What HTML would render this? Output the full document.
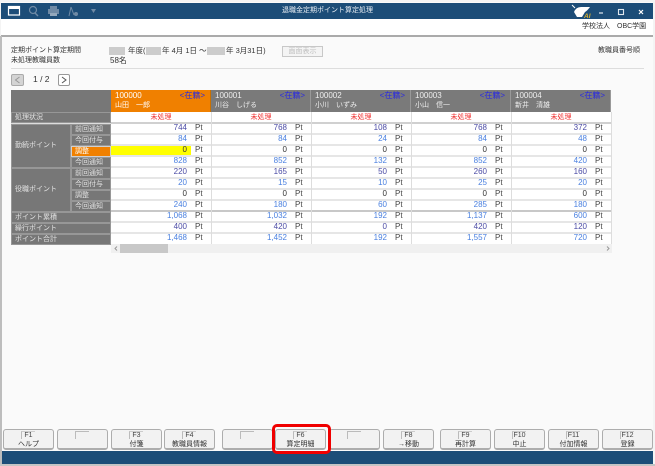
<!DOCTYPE html>
<html lang="ja">
<head>
<meta charset="utf-8">
<style>
html,body{margin:0;padding:0;width:655px;height:466px;overflow:hidden;background:#f4f4f4}
body{font-family:"Liberation Sans","Noto Sans CJK JP",sans-serif;font-size:7px;color:#333;position:relative}
div,span{position:absolute;white-space:nowrap;box-sizing:border-box}
#win{left:1px;top:2px;width:652px;height:462px;background:#fafafa;overflow:hidden;filter:blur(.3px)}
.abs{line-height:10px}
.m{font-size:7.5px}
.lb{background:#777;color:#e2e2e2;border:1px solid #979797;line-height:9px;padding-left:3px;height:11px}
.row{left:110px;width:500px;height:10px;background:#fff;font-size:8px}
.v{line-height:10px;width:40px;text-align:right;top:-1px}
.p{line-height:10px;top:-1px;color:#444}
.b{color:#4a80e0}.d{color:#4b4ba5}.k{color:#333}
.sep{top:110px;width:1px;height:132px;background:#ddd}
.gap{left:110px;width:500px;height:2px;background:#e6e6e6}
.hd{top:88px;height:22px;width:100px;background:#7a7a7a;color:#eee;border-right:1px solid #999}
.hd .id{left:4px;top:1px;line-height:10px;font-size:8px}
.hd .st{right:5px;top:1px;line-height:10px;color:#2a2ae0;font-size:8px}
.hd .nm{left:4px;top:11px;line-height:10px}
.st2{top:110px;height:11px;width:100px;background:#fff;color:#f03030;text-align:center;line-height:11px}
.fk{top:427px;height:21px;width:51px;background:#f2f2f2;border:1px solid #adadad;border-bottom-width:2px;border-radius:3px;color:#333;text-align:center}
.fk .n{left:17px;width:14px;top:1px;height:8px;line-height:8px;font-size:7px;color:#444;border-left:1px solid #bbb;border-top:1px solid #ccc}
.fk .t{left:0;right:0;top:10px;line-height:10px}
.fk .e{left:17px;top:1px;width:14px;height:8px;border-left:1px solid #bbb;border-top:1px solid #bbb}
</style>
</head>
<body>
<div id="win">
  <!-- title bar -->
  <div style="left:0;top:1px;width:652px;height:16px;background:#1c4d78"></div>
  <svg style="position:absolute;left:0;top:1px" width="110" height="16" viewBox="0 0 110 16">
    <rect x="7.500" y="3.500" width="11" height="8.500" fill="none" stroke="#fff" stroke-width="1.200"/><rect x="8" y="4" width="10" height="2" fill="#fff"/>
    <circle cx="32" cy="7" r="3.500" fill="none" stroke="#6f8aa5" stroke-width="1.200"/><path d="M34 10l3 3" stroke="#6f8aa5" stroke-width="1.400"/>
    <rect x="47" y="6" width="11" height="5" fill="#6f8aa5"/><rect x="49" y="3" width="7" height="3" fill="#6f8aa5"/><rect x="49" y="10" width="7" height="3" fill="#93a8bc"/>
    <path d="M70 4l-2 9M70 4l3 8" stroke="#6f8aa5" fill="none"/><circle cx="75" cy="11" r="2" fill="#6f8aa5"/>
    <path d="M90 6h5l-2.500 4z" fill="#6f8aa5"/>
  </svg>
  <div class="abs" style="left:281px;top:4px;color:#e8eef4;">退職金定期ポイント算定処理</div>
  <svg style="position:absolute;left:570px;top:1px" width="82" height="16" viewBox="0 0 82 16">
    <path d="M3 9Q5 4 10 4L19 4Q16 8 14 9L11 14L6 14Z" fill="#fff"/><path d="M1 2l3 3" stroke="#fff"/>
    <text x="13" y="15" font-size="6.500" font-weight="bold" font-style="italic" fill="#d8b030" font-family="Liberation Sans">AI</text>
    <path d="M28 10h4" stroke="#dfe7ee" stroke-width="1.200"/>
    <rect x="47.500" y="6.500" width="5" height="5" fill="none" stroke="#dfe7ee" stroke-width="1.100"/>
    <path d="M68 7l4 4M72 7l-4 4" stroke="#fff" stroke-width="1.200"/>
  </svg>
  <!-- white band -->
  <div style="left:0;top:17px;width:652px;height:18px;background:#fff;border-bottom:2px solid #aaa"></div>
  <div class="abs" style="left:581px;top:20px;">学校法人　OBC学園</div>
  <!-- period -->
  <div class="abs" style="left:10px;top:44px;">定期ポイント算定期間</div>
  <div class="abs" style="left:10px;top:54px;">未処理教職員数</div>
  <div style="left:108px;top:45px;width:16px;height:8px;background:#ccc"></div>
  <div class="abs m" style="left:127px;top:44px;">年度(</div>
  <div style="left:145px;top:45px;width:15px;height:8px;background:#ccc"></div>
  <div class="abs m" style="left:161px;top:44px;">年 4月 1日 ～</div>
  <div style="left:206px;top:45px;width:18px;height:8px;background:#ccc"></div>
  <div class="abs m" style="left:225px;top:44px;">年 3月31日)</div>
  <div class="abs m" style="left:109px;top:54px;font-size:8px">58名</div>
  <div class="abs" style="left:281px;top:44px;width:41px;height:11px;background:#f4f4f4;border:1px solid #c8c8c8;color:#c0c0c0;text-align:center;line-height:9px">画面表示</div>
  <div class="abs" style="left:597px;top:44px;">教職員番号順</div>
  <div style="left:10px;top:66px;width:633px;height:1px;background:#ddd"></div>
  <!-- pager -->
  <div style="left:10px;top:72px;width:13px;height:12px;background:#d4d4d4;border:1px solid #aaa;border-radius:2px"></div>
  <svg style="position:absolute;left:10px;top:72px" width="13" height="12"><path d="M8.500 3L4.500 6l4 3" fill="none" stroke="#999"/></svg>
  <div class="abs" style="left:32px;top:72px;font-size:8.500px">1 / 2</div>
  <div style="left:57px;top:72px;width:12px;height:12px;background:#fff;border:1px solid #999;border-radius:2px"></div>
  <svg style="position:absolute;left:57px;top:72px" width="12" height="12"><path d="M4 3l4 3-4 3" fill="none" stroke="#555"/></svg>

  <!-- table labels -->
  <div style="left:10px;top:88px;width:100px;height:154px;background:#ddd"></div>
  <div style="left:10px;top:88px;width:100px;height:22px;background:#777"></div>
  <div class="lb" style="left:10px;top:110px;width:100px;height:11px">処理状況</div>
  <div class="lb" style="left:10px;top:122px;width:60px;height:44px;line-height:42px">勤続ポイント</div>
  <div class="lb" style="left:70px;top:122px;width:40px">前回通知</div>
  <div class="lb" style="left:70px;top:133px;width:40px">今回付与</div>
  <div class="lb" style="left:70px;top:144px;width:40px;background:#f08000;color:#fff;border-color:#d0d0d0">調整</div>
  <div class="lb" style="left:70px;top:155px;width:40px">今回通知</div>
  <div class="lb" style="left:10px;top:166px;width:60px;height:44px;line-height:42px">役職ポイント</div>
  <div class="lb" style="left:70px;top:166px;width:40px">前回通知</div>
  <div class="lb" style="left:70px;top:177px;width:40px">今回付与</div>
  <div class="lb" style="left:70px;top:188px;width:40px">調整</div>
  <div class="lb" style="left:70px;top:199px;width:40px">今回通知</div>
  <div class="lb" style="left:10px;top:210px;width:100px">ポイント累積</div>
  <div class="lb" style="left:10px;top:221px;width:100px">繰行ポイント</div>
  <div class="lb" style="left:10px;top:232px;width:100px">ポイント合計</div>

  <!-- headers -->
  <div class="hd" style="left:110px;background:#f08000;color:#fff;border-right:1px solid #c87000"><span class="id">100000</span><span class="st">&lt;在籍&gt;</span><span class="nm">山田　一郎</span></div>
  <div class="hd" style="left:210px"><span class="id">100001</span><span class="st">&lt;在籍&gt;</span><span class="nm">川谷　しげる</span></div>
  <div class="hd" style="left:310px"><span class="id">100002</span><span class="st">&lt;在籍&gt;</span><span class="nm">小川　いずみ</span></div>
  <div class="hd" style="left:410px"><span class="id">100003</span><span class="st">&lt;在籍&gt;</span><span class="nm">小山　信一</span></div>
  <div class="hd" style="left:510px"><span class="id">100004</span><span class="st">&lt;在籍&gt;</span><span class="nm">新井　清雄</span></div>

  <div class="st2" style="left:110px">未処理</div>
  <div class="st2" style="left:210px">未処理</div>
  <div class="st2" style="left:310px">未処理</div>
  <div class="st2" style="left:410px">未処理</div>
  <div class="st2" style="left:510px">未処理</div>
  <div style="left:110px;top:120px;width:500px;height:2px;background:#d0d0d0"></div>

  <div class="row" style="top:122px"><span class="v d" style="left:36px">744</span><span class="p" style="left:84px">Pt</span><span class="v d" style="left:136px">768</span><span class="p" style="left:184px">Pt</span><span class="v d" style="left:236px">108</span><span class="p" style="left:284px">Pt</span><span class="v d" style="left:336px">768</span><span class="p" style="left:384px">Pt</span><span class="v d" style="left:436px">372</span><span class="p" style="left:484px">Pt</span></div>
  <div class="row" style="top:133px"><span class="v b" style="left:36px">84</span><span class="p" style="left:84px">Pt</span><span class="v b" style="left:136px">84</span><span class="p" style="left:184px">Pt</span><span class="v b" style="left:236px">24</span><span class="p" style="left:284px">Pt</span><span class="v b" style="left:336px">84</span><span class="p" style="left:384px">Pt</span><span class="v b" style="left:436px">48</span><span class="p" style="left:484px">Pt</span></div>
  <div class="row" style="top:144px"><span style="left:0;top:0;width:80px;height:10px;background:#ffff00"></span><span class="v k" style="left:36px">0</span><span class="p" style="left:84px">Pt</span><span class="v k" style="left:136px">0</span><span class="p" style="left:184px">Pt</span><span class="v k" style="left:236px">0</span><span class="p" style="left:284px">Pt</span><span class="v k" style="left:336px">0</span><span class="p" style="left:384px">Pt</span><span class="v k" style="left:436px">0</span><span class="p" style="left:484px">Pt</span></div>
  <div class="row" style="top:155px"><span class="v b" style="left:36px">828</span><span class="p" style="left:84px">Pt</span><span class="v b" style="left:136px">852</span><span class="p" style="left:184px">Pt</span><span class="v b" style="left:236px">132</span><span class="p" style="left:284px">Pt</span><span class="v b" style="left:336px">852</span><span class="p" style="left:384px">Pt</span><span class="v b" style="left:436px">420</span><span class="p" style="left:484px">Pt</span></div>
  <div class="row" style="top:166px"><span class="v d" style="left:36px">220</span><span class="p" style="left:84px">Pt</span><span class="v d" style="left:136px">165</span><span class="p" style="left:184px">Pt</span><span class="v d" style="left:236px">50</span><span class="p" style="left:284px">Pt</span><span class="v d" style="left:336px">260</span><span class="p" style="left:384px">Pt</span><span class="v d" style="left:436px">160</span><span class="p" style="left:484px">Pt</span></div>
  <div class="row" style="top:177px"><span class="v b" style="left:36px">20</span><span class="p" style="left:84px">Pt</span><span class="v b" style="left:136px">15</span><span class="p" style="left:184px">Pt</span><span class="v b" style="left:236px">10</span><span class="p" style="left:284px">Pt</span><span class="v b" style="left:336px">25</span><span class="p" style="left:384px">Pt</span><span class="v b" style="left:436px">20</span><span class="p" style="left:484px">Pt</span></div>
  <div class="row" style="top:188px"><span class="v k" style="left:36px">0</span><span class="p" style="left:84px">Pt</span><span class="v k" style="left:136px">0</span><span class="p" style="left:184px">Pt</span><span class="v k" style="left:236px">0</span><span class="p" style="left:284px">Pt</span><span class="v k" style="left:336px">0</span><span class="p" style="left:384px">Pt</span><span class="v k" style="left:436px">0</span><span class="p" style="left:484px">Pt</span></div>
  <div class="row" style="top:199px"><span class="v b" style="left:36px">240</span><span class="p" style="left:84px">Pt</span><span class="v b" style="left:136px">180</span><span class="p" style="left:184px">Pt</span><span class="v b" style="left:236px">60</span><span class="p" style="left:284px">Pt</span><span class="v b" style="left:336px">285</span><span class="p" style="left:384px">Pt</span><span class="v b" style="left:436px">180</span><span class="p" style="left:484px">Pt</span></div>
  <div class="row" style="top:210px"><span class="v b" style="left:36px">1,068</span><span class="p" style="left:84px">Pt</span><span class="v b" style="left:136px">1,032</span><span class="p" style="left:184px">Pt</span><span class="v b" style="left:236px">192</span><span class="p" style="left:284px">Pt</span><span class="v b" style="left:336px">1,137</span><span class="p" style="left:384px">Pt</span><span class="v b" style="left:436px">600</span><span class="p" style="left:484px">Pt</span></div>
  <div class="row" style="top:221px"><span class="v d" style="left:36px">400</span><span class="p" style="left:84px">Pt</span><span class="v d" style="left:136px">420</span><span class="p" style="left:184px">Pt</span><span class="v d" style="left:236px">0</span><span class="p" style="left:284px">Pt</span><span class="v d" style="left:336px">420</span><span class="p" style="left:384px">Pt</span><span class="v d" style="left:436px">120</span><span class="p" style="left:484px">Pt</span></div>
  <div class="row" style="top:232px"><span class="v b" style="left:36px">1,468</span><span class="p" style="left:84px">Pt</span><span class="v b" style="left:136px">1,452</span><span class="p" style="left:184px">Pt</span><span class="v b" style="left:236px">192</span><span class="p" style="left:284px">Pt</span><span class="v b" style="left:336px">1,557</span><span class="p" style="left:384px">Pt</span><span class="v b" style="left:436px">720</span><span class="p" style="left:484px">Pt</span></div>

  <!-- row gaps -->
  <div class="gap" style="top:131px"></div>
  <div class="gap" style="top:142px"></div>
  <div class="gap" style="top:153px"></div>
  <div class="gap" style="top:164px"></div>
  <div class="gap" style="top:175px"></div>
  <div class="gap" style="top:186px"></div>
  <div class="gap" style="top:197px"></div>
  <div class="gap" style="top:208px;background:#c8c8c8"></div>
  <div class="gap" style="top:219px"></div>
  <div class="gap" style="top:230px"></div>
  <div class="sep" style="left:210px"></div>
  <div class="sep" style="left:310px"></div>
  <div class="sep" style="left:410px"></div>
  <div class="sep" style="left:510px"></div>
  <div class="sep" style="left:610px"></div>

  <!-- scrollbar -->
  <div style="left:110px;top:242px;width:501px;height:9px;background:#f0f0f0"></div>
  <div style="left:119px;top:242px;width:48px;height:9px;background:#c8c8c8"></div>
  <svg style="position:absolute;left:110px;top:242px" width="501" height="9"><path d="M6 2.500L4 4.500l2 2M496 2.500l2 2-2 2" fill="none" stroke="#999"/></svg>

  <!-- function keys -->
  <div class="fk" style="left:2px"><span class="n">F1</span><span class="t">ヘルプ</span></div>
  <div class="fk" style="left:56px"><span class="e"></span></div>
  <div class="fk" style="left:110px"><span class="n">F3</span><span class="t">付箋</span></div>
  <div class="fk" style="left:163px"><span class="n">F4</span><span class="t">教職員情報</span></div>
  <div class="fk" style="left:221px"><span class="e"></span></div>
  <div class="fk" style="left:274px"><span class="n">F6</span><span class="t">算定明細</span></div>
  <div class="fk" style="left:328px"><span class="e"></span></div>
  <div class="fk" style="left:382px"><span class="n">F8</span><span class="t">→移動</span></div>
  <div class="fk" style="left:439px"><span class="n">F9</span><span class="t">再計算</span></div>
  <div class="fk" style="left:493px"><span class="n">F10</span><span class="t">中止</span></div>
  <div class="fk" style="left:547px"><span class="n">F11</span><span class="t">付加情報</span></div>
  <div class="fk" style="left:601px"><span class="n">F12</span><span class="t">登録</span></div>

  <!-- footer -->
  <div style="left:0;top:449px;width:652px;height:13px;background:#1c4d78"></div>
  <div style="left:271px;top:422px;width:59px;height:30px;border:3px solid #f00000;border-radius:5px"></div>
</div>
<div style="left:0;top:36px;width:2px;height:428px;background:#bdbdbd"></div>
<div style="left:0;top:464px;width:655px;height:2px;background:#c4c4c4"></div>
</body>
</html>
